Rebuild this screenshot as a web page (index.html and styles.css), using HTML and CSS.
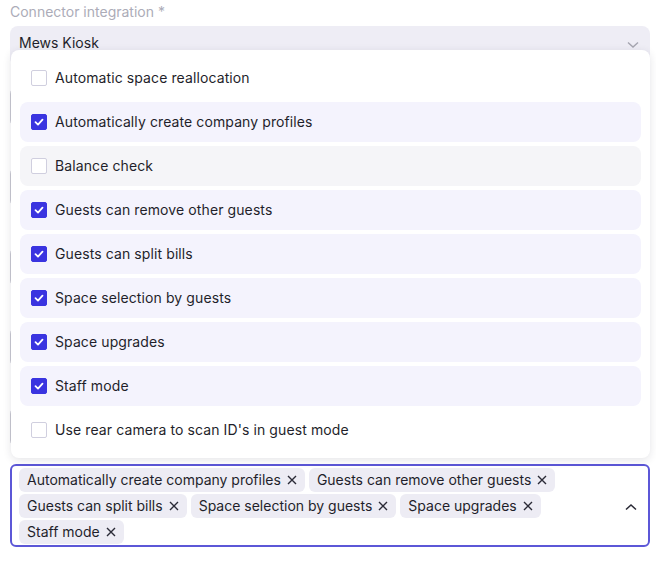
FILE: index.html
```html
<!DOCTYPE html>
<html lang="en">
<head>
  <meta charset="UTF-8">
  <meta name="viewport" content="width=device-width, initial-scale=1.0">
  <title>Connector integration</title>
  <link rel="stylesheet" href="styles.css">
</head>
<body>
  <div class="form">
    <div class="field">
      <label class="label">Connector integration *</label>
      <div class="select-wrap">
        <div class="select">
          <span>Mews Kiosk</span>
          <svg class="chevron" width="12" height="8" viewBox="0 0 12 8"><polyline points="1,1.5 6,6 11,1.5" fill="none" stroke="#a5a5b0" stroke-width="1.4"/></svg>
        </div>

        <!-- options menu -->
        <div class="menu">
          <div class="option"><span class="box"></span>Automatic space reallocation</div>
          <div class="option selected"><span class="box checked"><svg width="12" height="12" viewBox="0 0 12 12"><polyline points="2.5,6.2 5,8.6 9.5,3.6" fill="none" stroke="#fff" stroke-width="1.8" stroke-linecap="round" stroke-linejoin="round"/></svg></span>Automatically create company profiles</div>
          <div class="option hover"><span class="box"></span>Balance check</div>
          <div class="option selected"><span class="box checked"><svg width="12" height="12" viewBox="0 0 12 12"><polyline points="2.5,6.2 5,8.6 9.5,3.6" fill="none" stroke="#fff" stroke-width="1.8" stroke-linecap="round" stroke-linejoin="round"/></svg></span>Guests can remove other guests</div>
          <div class="option selected"><span class="box checked"><svg width="12" height="12" viewBox="0 0 12 12"><polyline points="2.5,6.2 5,8.6 9.5,3.6" fill="none" stroke="#fff" stroke-width="1.8" stroke-linecap="round" stroke-linejoin="round"/></svg></span>Guests can split bills</div>
          <div class="option selected"><span class="box checked"><svg width="12" height="12" viewBox="0 0 12 12"><polyline points="2.5,6.2 5,8.6 9.5,3.6" fill="none" stroke="#fff" stroke-width="1.8" stroke-linecap="round" stroke-linejoin="round"/></svg></span>Space selection by guests</div>
          <div class="option selected"><span class="box checked"><svg width="12" height="12" viewBox="0 0 12 12"><polyline points="2.5,6.2 5,8.6 9.5,3.6" fill="none" stroke="#fff" stroke-width="1.8" stroke-linecap="round" stroke-linejoin="round"/></svg></span>Space upgrades</div>
          <div class="option selected"><span class="box checked"><svg width="12" height="12" viewBox="0 0 12 12"><polyline points="2.5,6.2 5,8.6 9.5,3.6" fill="none" stroke="#fff" stroke-width="1.8" stroke-linecap="round" stroke-linejoin="round"/></svg></span>Staff mode</div>
          <div class="option"><span class="box"></span>Use rear camera to scan ID's in guest mode</div>
        </div>
      </div>
    </div>

    <!-- fields hidden under the menu -->
    <div class="behind">
      <div class="ghost"></div>
      <div class="ghost"></div>
      <div class="ghost"></div>
      <div class="ghost"></div>
      <div class="ghost"></div>
    </div>

    <div class="multi">
      <span class="tag">Automatically create company profiles <svg width="10" height="10" viewBox="0 0 10 10"><path d="M1 1L9 9M9 1L1 9" stroke="#2a2a36" stroke-width="1.4"/></svg></span>
      <span class="tag">Guests can remove other guests <svg width="10" height="10" viewBox="0 0 10 10"><path d="M1 1L9 9M9 1L1 9" stroke="#2a2a36" stroke-width="1.4"/></svg></span>
      <span class="tag">Guests can split bills <svg width="10" height="10" viewBox="0 0 10 10"><path d="M1 1L9 9M9 1L1 9" stroke="#2a2a36" stroke-width="1.4"/></svg></span>
      <span class="tag">Space selection by guests <svg width="10" height="10" viewBox="0 0 10 10"><path d="M1 1L9 9M9 1L1 9" stroke="#2a2a36" stroke-width="1.4"/></svg></span>
      <span class="tag">Space upgrades <svg width="10" height="10" viewBox="0 0 10 10"><path d="M1 1L9 9M9 1L1 9" stroke="#2a2a36" stroke-width="1.4"/></svg></span>
      <span class="tag">Staff mode <svg width="10" height="10" viewBox="0 0 10 10"><path d="M1 1L9 9M9 1L1 9" stroke="#2a2a36" stroke-width="1.4"/></svg></span>
      <svg class="chevron-up" width="12" height="8" viewBox="0 0 12 8"><polyline points="1,6.5 6,2 11,6.5" fill="none" stroke="#2a2a36" stroke-width="1.5"/></svg>
    </div>
  </div>
</body>
</html>
```

FILE: styles.css
```css
body {
  margin: 0;
  font-family: Inter, "Noto Sans", sans-serif;
  font-size: 14px;
  color: #1f1f2b;
  background: #fff;
}

.form {
  padding: 2px 6px 0 10px;
}

.label {
  display: block;
  line-height: 20px;
  color: #acacb8;
}

.select-wrap {
  position: relative;
  margin-top: 4px;
}

.select {
  display: flex;
  justify-content: space-between;
  align-items: flex-start;
  height: 40px;
  box-sizing: border-box;
  padding: 7px 11px 0 9px;
  line-height: 20px;
  background: #eeedf5;
  border-radius: 8px;
}

.chevron {
  margin-top: 8px;
}

.menu {
  position: absolute;
  top: 24px;
  left: 1px;
  right: 0;
  z-index: 2;
  padding: 8px 9px;
  background: #fff;
  border-radius: 8px;
  box-shadow: 0 2px 8px rgba(30, 30, 60, 0.12);
  display: flex;
  flex-direction: column;
  gap: 4px;
  letter-spacing: 0.1px;
}

.option {
  display: flex;
  align-items: center;
  gap: 8px;
  height: 40px;
  padding: 0 11px;
  border-radius: 8px;
  line-height: 20px;
}

.option.selected {
  background: #f4f3fd;
}

.option.hover {
  background: #f5f5f8;
}

.box {
  width: 16px;
  height: 16px;
  box-sizing: border-box;
  border: 1px solid #d0cfdf;
  border-radius: 2px;
  background: #fff;
  display: flex;
  align-items: center;
  justify-content: center;
  flex-shrink: 0;
}

.box.checked {
  background: #3a34e0;
  border-color: #3a34e0;
}

.behind {
  display: flex;
  flex-direction: column;
  gap: 38px;
  padding-top: 20px;
  height: 378px;
}

.ghost {
  height: 40px;
  border: 1px solid #c9c9d2;
  border-radius: 8px;
}

.multi {
  position: relative;
  display: flex;
  flex-wrap: wrap;
  gap: 2px 4px;
  padding: 2px 40px 1px 7px;
  border: 2px solid #5c57d7;
  border-radius: 6px;
  min-height: 79px;
  box-sizing: border-box;
  align-content: flex-start;
}

.tag {
  display: inline-flex;
  align-items: center;
  gap: 6px;
  height: 24px;
  padding: 0 8px;
  background: #edecf4;
  border-radius: 6px;
  line-height: 20px;
}

.chevron-up {
  position: absolute;
  right: 11px;
  top: 37px;
}
```
